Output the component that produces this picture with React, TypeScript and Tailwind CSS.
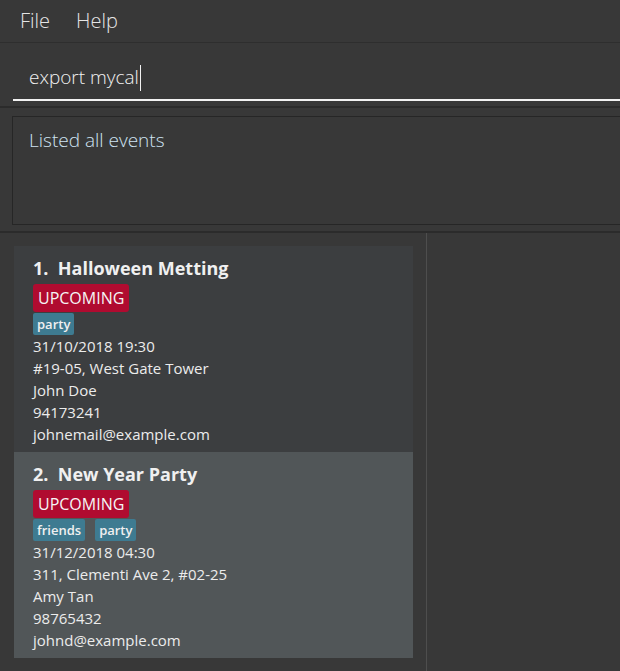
const EVENTS = [
  {
    id: 1,
    name: "Halloween Metting",
    tags: ["party"],
    date: "31/10/2018 19:30",
    address: "#19-05, West Gate Tower",
    contact: "John Doe",
    phone: "94173241",
    email: "johnemail@example.com",
  },
  {
    id: 2,
    name: "New Year Party",
    tags: ["friends", "party"],
    date: "31/12/2018 04:30",
    address: "311, Clementi Ave 2, #02-25",
    contact: "Amy Tan",
    phone: "98765432",
    email: "johnd@example.com",
  },
];

function EventCard({ event, index }: { event: (typeof EVENTS)[number]; index: number }) {
  const bg = index % 2 === 0 ? "bg-[#3c3e40]" : "bg-[#515658]";
  return (
    <div className={`${bg} h-[206px] pl-[19px] pt-[11px]`}>
      <h3 className="text-[18px] font-bold leading-[22px] text-[#f0f0f0]">
        {index + 1}.&nbsp;&nbsp;{event.name}
      </h3>
      <div className="mt-[5px] flex">
        <span className="rounded-[3px] bg-[#b00b30] px-[5px] text-[16px] leading-[28px] text-[#f5f5f5]">
          UPCOMING
        </span>
      </div>
      <div className="mt-px flex gap-[10px]">
        {event.tags.map((tag) => (
          <span
            key={tag}
            className="rounded-[2px] bg-[#3e7b91] px-[4px] text-[13px] font-semibold leading-[22px] text-[#f0f0f0]"
          >
            {tag}
          </span>
        ))}
      </div>
      <div className="text-[15px] leading-[22px] text-[#ececec]">
        <p>{event.date}</p>
        <p>{event.address}</p>
        <p>{event.contact}</p>
        <p>{event.phone}</p>
        <p>{event.email}</p>
      </div>
    </div>
  );
}

export default function App() {
  return (
    <div
      className="flex h-[671px] w-[620px] flex-col overflow-hidden bg-[#383838]"
      style={{ fontFamily: '"Open Sans", "Noto Sans", sans-serif' }}
    >
      {/* menu bar */}
      <div className="flex h-[43px] shrink-0 items-center gap-[26px] border-b border-[#2e2e2e] pl-[20px] text-[20px] font-light text-[#e6e6e6]">
        <span>File</span>
        <span>Help</span>
      </div>

      {/* command box */}
      <div className="h-[65px] shrink-0 border-b-2 border-[#2b2b2b] pl-[13px] pt-[21px]">
        <div className="flex h-[37px] items-center border-b-2 border-[#f2f2f2] pl-[16px] pb-[8px] text-[19px] font-light text-[#f2f2f2]">
          export mycal
          <span className="ml-px h-[26px] w-px bg-[#f2f2f2]" />
        </div>
      </div>

      {/* result display */}
      <div className="h-[125px] shrink-0 border-b-2 border-[#2b2b2b] pl-[12px] pt-[8px] pb-[6px]">
        <div className="h-full border border-r-0 border-[#262626] pl-[16px] pt-[9px] text-[19px] font-light text-[#cfe3f2]">
          Listed all events
        </div>
      </div>

      {/* event list */}
      <div className="flex flex-1">
        <div className="w-[427px] border-r border-[#4e4e4e] pl-[14px] pr-[13px] pt-[13px]">
          {EVENTS.map((event, i) => (
            <EventCard key={event.id} event={event} index={i} />
          ))}
        </div>
        <div className="flex-1" />
      </div>
    </div>
  );
}
